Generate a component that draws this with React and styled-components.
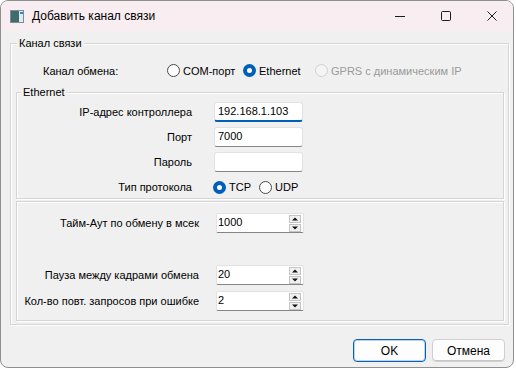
import React from "react";
import styled, { createGlobalStyle } from "styled-components";

const Global = createGlobalStyle`
  html, body { margin: 0; padding: 0; background: #ffffff; }
  * { box-sizing: border-box; }
`;

const Window = styled.div`
  width: 514px;
  height: 368px;
  border: 1px solid #8f8f8f;
  border-radius: 8px;
  overflow: hidden;
  background: #f0f0f0;
  display: flex;
  flex-direction: column;
  font-family: "Liberation Sans", Arial, sans-serif;
  font-size: 11px;
  color: #000;
`;

const TitleBar = styled.div`
  height: 30px;
  flex: none;
  background: #f8eef1;
  display: flex;
  align-items: center;
  padding-left: 9px;
`;

const TitleText = styled.div`
  margin-left: 8px;
  font-family: "Segoe UI", "Liberation Sans", Arial, sans-serif;
  font-size: 12px;
  flex: 1;
`;

const CaptionButtons = styled.div`
  display: flex;
  height: 100%;
  margin-right: -2px;
`;

const CaptionButton = styled.div`
  width: 46px;
  height: 100%;
  display: flex;
  align-items: center;
  justify-content: center;
`;

const Body = styled.div`
  flex: 1;
  display: flex;
  flex-direction: column;
  padding: 5px 4px 0 9px;
`;

const Group = styled.fieldset`
  margin: ${(p) => p.$margin || "0"};
  min-width: 0;
  border: 1px solid #d5d5d5;
  box-shadow: inset 1px 1px 0 #ffffff, 1px 1px 0 #ffffff;
  padding: ${(p) => p.$pad};
`;

const Legend = styled.legend`
  padding: 0 2px;
  margin-left: ${(p) => p.$ml}px;
  line-height: 14px;
  background: #f0f0f0;
`;

const ExchangeRow = styled.div`
  height: 35px;
  display: flex;
  align-items: center;
  padding: 6px 0 0 27px;
`;

const ExchangeLabel = styled.span`
  width: 124px;
`;

const RadioItem = styled.span`
  display: inline-flex;
  align-items: center;
  gap: 3px;
  width: ${(p) => (p.$w ? `${p.$w}px` : "auto")};
  color: ${(p) => (p.$disabled ? "#9a9a9a" : "#000")};
  white-space: nowrap;
`;

const RadioCircle = styled.span`
  width: 13px;
  height: 13px;
  border-radius: 50%;
  flex: none;
  display: flex;
  align-items: center;
  justify-content: center;
  background: ${(p) => (p.$checked ? "#005fb8" : p.$disabled ? "#f4f4f4" : "#ffffff")};
  border: ${(p) => (p.$checked ? "none" : p.$disabled ? "1px solid #d0d0d0" : "1px solid #4a4a4a")};
  &::after {
    content: "";
    display: ${(p) => (p.$checked ? "block" : "none")};
    width: 5px;
    height: 5px;
    border-radius: 50%;
    background: #ffffff;
  }
`;

const FormGrid = styled.div`
  display: grid;
  grid-template-columns: ${(p) => p.$label}px ${(p) => p.$input}px;
  column-gap: ${(p) => p.$gap}px;
  grid-auto-rows: 20px;
  row-gap: 5px;
  align-items: center;
`;

const FieldRow = styled.div`
  display: grid;
  grid-template-columns: ${(p) => p.$label}px ${(p) => p.$input}px;
  column-gap: ${(p) => p.$gap}px;
  height: 20px;
  align-items: center;
  margin-top: ${(p) => p.$mt || 0}px;
`;

const Label = styled.span`
  text-align: right;
  white-space: nowrap;
`;

const TextBox = styled.div`
  height: 20px;
  background: #ffffff;
  border: 1px solid #e2e2e2;
  border-bottom: ${(p) => (p.$focused ? "2px solid #005fb8" : "1px solid #858585")};
  border-radius: 3px;
  padding: 0 3px 2px;
  font-size: 11px;
  display: flex;
  align-items: center;
`;

const SpinBox = styled.div`
  height: 20px;
  background: #ffffff;
  border: 1px solid #e2e2e2;
  border-bottom: 1px solid #858585;
  border-radius: 2px;
  padding: 0 2px 0 1px;
  font-size: 11px;
  display: flex;
  align-items: center;
`;

const SpinValue = styled.span`
  flex: 1;
  padding-bottom: 2px;
`;

const SpinButtons = styled.div`
  display: flex;
  flex-direction: column;
  gap: 1px;
`;

const SpinButton = styled.div`
  width: 12px;
  height: 8px;
  background: #f0f0f0;
  border: 1px solid #c4c4c4;
  display: flex;
  align-items: center;
  justify-content: center;
`;

const ProtoRow = styled.div`
  display: flex;
  align-items: center;
  margin-left: -1px;
`;

const Footer = styled.div`
  display: flex;
  justify-content: flex-end;
  gap: 6px;
  padding: 14px 4px 0 0;
`;

const Button = styled.div`
  width: 73px;
  height: 23px;
  border-radius: 4px;
  background: #fdfdfd;
  border: 1px solid ${(p) => (p.$default ? "#0a5fb4" : "#d0d0d0")};
  box-shadow: ${(p) => (p.$default ? "inset 0 0 0 1px #bcd5ee" : "inset 0 -1px 0 #c6c6c6")};
  font-size: 12px;
  display: flex;
  align-items: center;
  justify-content: center;
`;

const Arrow = ({ up }) => (
  <svg width="6" height="4" viewBox="0 0 6 4">
    <polygon points={up ? "0,3.5 6,3.5 3,0.5" : "0,0.5 6,0.5 3,3.5"} fill="#111" />
  </svg>
);

const Spin = ({ value }) => (
  <SpinBox>
    <SpinValue>{value}</SpinValue>
    <SpinButtons>
      <SpinButton>
        <Arrow up />
      </SpinButton>
      <SpinButton>
        <Arrow />
      </SpinButton>
    </SpinButtons>
  </SpinBox>
);

const Radio = ({ label, checked, disabled, w }) => (
  <RadioItem $w={w} $disabled={disabled}>
    <RadioCircle $checked={checked} $disabled={disabled} />
    {label}
  </RadioItem>
);

export default function App() {
  return (
    <>
      <Global />
      <Window>
        <TitleBar>
          <svg width="14" height="13" viewBox="0 0 14 13">
            <rect x="0.5" y="0.5" width="13" height="12" fill="#e3eaef" stroke="#7d8c99" />
            <rect x="1" y="1" width="8" height="11" fill="#3f6d6a" />
            <rect x="10" y="2" width="3" height="2" fill="#3b7fd0" />
          </svg>
          <TitleText>Добавить канал связи</TitleText>
          <CaptionButtons>
            <CaptionButton>
              <svg width="10" height="10" viewBox="0 0 10 10">
                <line x1="0" y1="5.5" x2="10" y2="5.5" stroke="#1b1b1b" />
              </svg>
            </CaptionButton>
            <CaptionButton>
              <svg width="10" height="10" viewBox="0 0 10 10">
                <rect x="0.5" y="0.5" width="9" height="9" rx="1" fill="none" stroke="#1b1b1b" />
              </svg>
            </CaptionButton>
            <CaptionButton>
              <svg width="10" height="10" viewBox="0 0 10 10">
                <path d="M0.5 0.5 L9.5 9.5 M9.5 0.5 L0.5 9.5" stroke="#1b1b1b" />
              </svg>
            </CaptionButton>
          </CaptionButtons>
        </TitleBar>
        <Body>
          <Group $pad="0 4px 3px 5px">
            <Legend $ml={1}>Канал связи</Legend>
            <ExchangeRow>
              <ExchangeLabel>Канал обмена:</ExchangeLabel>
              <Radio label="COM-порт" w={76} />
              <Radio label="Ethernet" checked w={72} />
              <Radio label="GPRS с динамическим IP" disabled />
            </ExchangeRow>
            <Group $pad="3px 0 1px 0">
              <Legend $ml={4}>Ethernet</Legend>
              <FormGrid $label={175} $input={89} $gap={22}>
                <Label>IP-адрес контроллера</Label>
                <TextBox $focused>192.168.1.103</TextBox>
                <Label>Порт</Label>
                <TextBox>7000</TextBox>
                <Label>Пароль</Label>
                <TextBox />
                <Label>Тип протокола</Label>
                <ProtoRow>
                  <Radio label="TCP" checked w={46} />
                  <Radio label="UDP" />
                </ProtoRow>
              </FormGrid>
            </Group>
            <Group $pad="11px 0 9px 0" $margin="2px 0 0 0">
              <FieldRow $label={182} $input={88} $gap={17}>
                <Label>Тайм-Аут по обмену в мсек</Label>
                <Spin value="1000" />
              </FieldRow>
              <FieldRow $label={182} $input={88} $gap={17} $mt={32}>
                <Label>Пауза между кадрами обмена</Label>
                <Spin value="20" />
              </FieldRow>
              <FieldRow $label={182} $input={88} $gap={17} $mt={6}>
                <Label>Кол-во повт. запросов при ошибке</Label>
                <Spin value="2" />
              </FieldRow>
            </Group>
          </Group>
          <Footer>
            <Button $default>OK</Button>
            <Button>Отмена</Button>
          </Footer>
        </Body>
      </Window>
    </>
  );
}
